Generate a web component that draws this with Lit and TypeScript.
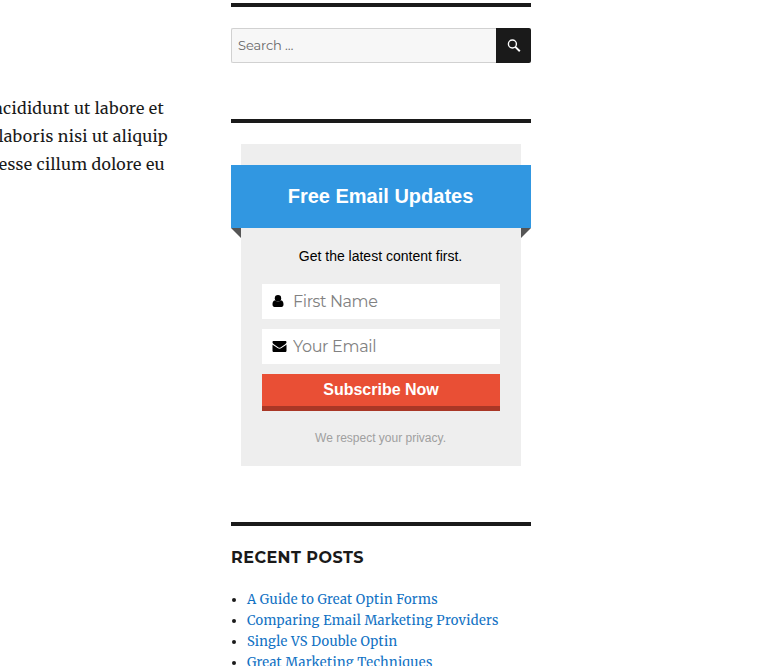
import { LitElement, html, css } from "lit";
import { customElement } from "lit/decorators.js";

@customElement("search-box")
class SearchBox extends LitElement {
  static styles = css`
    :host { display: block; }
    .form { display: flex; height: 35px; }
    .field { box-sizing: border-box; flex: 1; min-width: 0; height: 35px; padding: 0 6px 1px; border: 1px solid #d1d1d1; border-right: 0; border-radius: 2px 0 0 2px; background: #f7f7f7; outline: 0; font: 13px/19px Montserrat, Inter, sans-serif; letter-spacing: -0.1px; }
    .field::placeholder { color: #686868; opacity: 1; }
    .button { display: flex; align-items: center; justify-content: center; width: 35px; padding: 0; border: 0; border-radius: 0 2px 2px 0; background: #1a1a1a; color: #fff; }
  `;
  render() {
    return html`<form class="form">
      <input class="field" type="search" placeholder="Search …" />
      <button class="button" type="button" aria-label="Search">
        <svg width="14" height="14" viewBox="0 0 14 14" fill="none" stroke="currentColor">
          <circle cx="5.4" cy="5" r="4" stroke-width="1.4" />
          <path d="M8.3 7.9 12.8 12.2" stroke-width="2" />
        </svg>
      </button>
    </form>`;
  }
}

@customElement("optin-form")
class OptinForm extends LitElement {
  static styles = css`
    :host { display: block; margin: 0 10px; font-family: Arial, "Liberation Sans", sans-serif; text-align: center; }
    .card { display: flex; flex-direction: column; box-sizing: border-box; height: 322px; padding: 21px 21px 0; background: #eee; }
    .ribbon { position: relative; box-sizing: border-box; height: 63px; margin: 0 -31px; padding-right: 1px; background: #3197e1; color: #fff; font-size: 20px; font-weight: 700; line-height: 62px; }
    .ribbon::before, .ribbon::after { content: ""; position: absolute; top: 100%; width: 10px; height: 10px; background: #555; }
    .ribbon::before { left: 0; clip-path: polygon(0 0, 100% 0, 100% 100%); }
    .ribbon::after { right: 0; clip-path: polygon(0 0, 100% 0, 0 100%); }
    .lead { margin: 18px 1px 18px 0; font-size: 14px; line-height: 20px; color: #000; }
    .row { display: flex; align-items: center; height: 35px; margin-bottom: 10px; padding-left: 10px; background: #fff; }
    .icon { flex: none; width: 21px; height: 15px; margin-bottom: 1px; }
    .field { flex: 1; min-width: 0; height: 35px; box-sizing: border-box; border: 0; padding: 0; background: none; outline: 0; font: 400 16px/20px Montserrat, Inter, sans-serif; }
    .first { letter-spacing: -0.4px; }
    .email { letter-spacing: -0.3px; }
    .field::placeholder { color: #818181; opacity: 1; }
    .submit { height: 37px; padding: 0 0 1px; border: 0; border-bottom: 5px solid #a93726; background: #e94f35; color: #fff; font: 700 16px/30px Arial, "Liberation Sans", sans-serif; }
    .note { margin: 19px 1px 0 0; font-size: 12px; line-height: 16px; color: #a0a0a0; }
  `;
  render() {
    return html`<div class="card">
      <div class="ribbon">Free Email Updates</div>
      <p class="lead">Get the latest content first.</p>
      <label class="row">
        <svg class="icon" viewBox="0 0 21 15">
          <circle cx="6" cy="4.2" r="3.2" />
          <path d="M3.2 6.2C1 6.4.5 8.4.5 10.5.5 12 1.3 13 2.5 13h7c1.2 0 2-1 2-2.5 0-2.1-.5-4.1-2.7-4.3a4 4 0 0 1-5.6 0Z" />
        </svg>
        <input class="field first" placeholder="First Name" />
      </label>
      <label class="row">
        <svg class="icon" viewBox="0 0 21 15">
          <path d="M1.5 2h11.7c.8 0 1.3.5 1.3 1.2 0 .8-.6 1.5-1.3 2L8.5 8.4c-.8.5-1.2.5-2 0L1.8 5.2C1 4.7.5 4 .5 3.2.5 2.5.8 2 1.5 2Z" />
          <path d="M.5 5.5c.3.3.5.5.9.8l4.1 2.8c1.5 1 2.5 1 4 0l4.1-2.8.9-.8v6.2c0 .7-.6 1.3-1.3 1.3H1.8c-.7 0-1.3-.6-1.3-1.3Z" />
        </svg>
        <input class="field email" placeholder="Your Email" />
      </label>
      <button class="submit" type="button">Subscribe Now</button>
      <p class="note">We respect your privacy.</p>
    </div>`;
  }
}

@customElement("app-root")
class AppRoot extends LitElement {
  static styles = css`
    :host { display: block; height: 666px; overflow: hidden; background: #fff; color: #1a1a1a; font-family: Merriweather, "DejaVu Serif", serif; }
    .page { display: grid; grid-template-columns: 168px 300px; column-gap: 63px; }
    .article { display: flex; flex-direction: column; align-items: flex-end; margin: 94px 0 0; font-size: 16px; line-height: 28px; letter-spacing: 0.33px; white-space: nowrap; }
    .l1 { margin-right: 4px; }
    .l3 { margin-right: 3px; }
    .sidebar { padding-top: 3px; }
    .widget { border-top: 4px solid #1a1a1a; padding-top: 21px; margin-bottom: 56px; }
    .title { margin: 1px 0 21px; font: 700 16px/20px Montserrat, Inter, sans-serif; letter-spacing: 0.45px; }
    .posts { margin: 0; padding: 0; list-style: none; font-size: 13px; line-height: 21px; letter-spacing: 0.3px; white-space: nowrap; }
    .post { display: flex; align-items: center; height: 21px; }
    .post::before { content: ""; flex: none; width: 4px; height: 4px; margin: 1px 11px 0 1px; border-radius: 50%; background: #1a1a1a; }
    .link { color: #1272c4; text-decoration: none; }
  `;
  render() {
    const posts = ["A Guide to Great Optin Forms", "Comparing Email Marketing Providers", "Single VS Double Optin", "Great Marketing Techniques"];
    return html`<div class="page">
      <p class="article">
        <span class="l1">incididunt ut labore et</span>
        <span class="l2">laboris nisi ut aliquip</span>
        <span class="l3">esse cillum dolore eu</span>
      </p>
      <aside class="sidebar">
        <section class="widget"><search-box></search-box></section>
        <section class="widget"><optin-form></optin-form></section>
        <section class="widget">
          <h2 class="title">RECENT POSTS</h2>
          <ul class="posts">${posts.map((p) => html`<li class="post"><a class="link" href="#">${p}</a></li>`)}</ul>
        </section>
      </aside>
    </div>`;
  }
}
